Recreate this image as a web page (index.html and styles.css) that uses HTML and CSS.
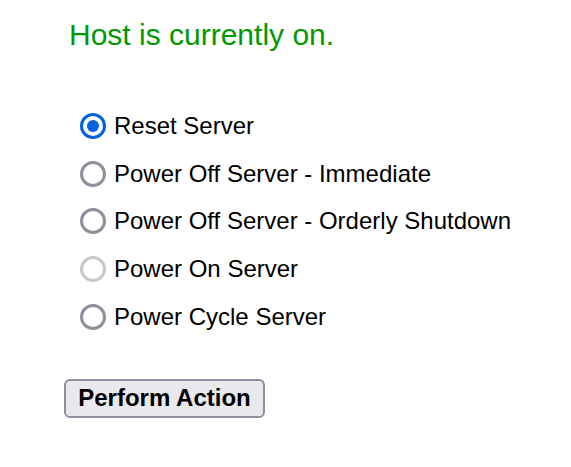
FILE: index.html
```html
<!DOCTYPE html>
<html>
<head>
<meta charset="utf-8">
<link rel="stylesheet" href="styles.css">
</head>
<body>
<div class="page">
  <h1 class="status">Host is currently on.</h1>
  <form class="actions">
    <label class="row"><input type="radio" name="act" class="radio" checked><span>Reset Server</span></label>
    <label class="row"><input type="radio" name="act" class="radio"><span>Power Off Server - Immediate</span></label>
    <label class="row"><input type="radio" name="act" class="radio"><span>Power Off Server - Orderly Shutdown</span></label>
    <label class="row"><input type="radio" name="act" class="radio" disabled><span>Power On Server</span></label>
    <label class="row"><input type="radio" name="act" class="radio"><span>Power Cycle Server</span></label>
    <button type="button" class="btn">Perform Action</button>
  </form>
</div>
</body>
</html>
```
FILE: styles.css
```css
html, body {
  margin: 0;
  padding: 0;
  background: #ffffff;
}
body {
  font-family: "Liberation Sans", Arial, sans-serif;
  color: #000;
}
.page {
  padding: 18px 0 0 64px;
}
.status {
  margin: 0 0 0 5px;
  font-size: 30px;
  line-height: 34px;
  font-weight: normal;
  color: #009900;
}
.actions {
  margin: 50px 0 0 16px;
  display: flex;
  flex-direction: column;
  align-items: flex-start;
}
.row {
  display: flex;
  align-items: center;
  height: 47.75px;
  font-size: 24px;
  line-height: 28px;
}
.radio {
  appearance: none;
  -webkit-appearance: none;
  box-sizing: border-box;
  width: 26px;
  height: 26px;
  margin: 0 8px 0 0;
  border: 3px solid #8f8f9d;
  border-radius: 50%;
  background: #fff;
  display: grid;
  place-items: center;
}
.radio:checked {
  border-color: #0060df;
}
.radio:checked::after {
  content: "";
  width: 12px;
  height: 12px;
  border-radius: 50%;
  background: #0060df;
}
.radio:disabled {
  border-color: #c8c8cd;
}
.btn {
  margin: 38px 0 0 -16px;
  box-sizing: border-box;
  width: 201px;
  height: 39px;
  padding: 0;
  font-family: "Liberation Sans", Arial, sans-serif;
  font-size: 24px;
  font-weight: bold;
  color: #000;
  background: #e9e9ed;
  border: 2px solid #8f8f9d;
  border-radius: 6px;
}
```
